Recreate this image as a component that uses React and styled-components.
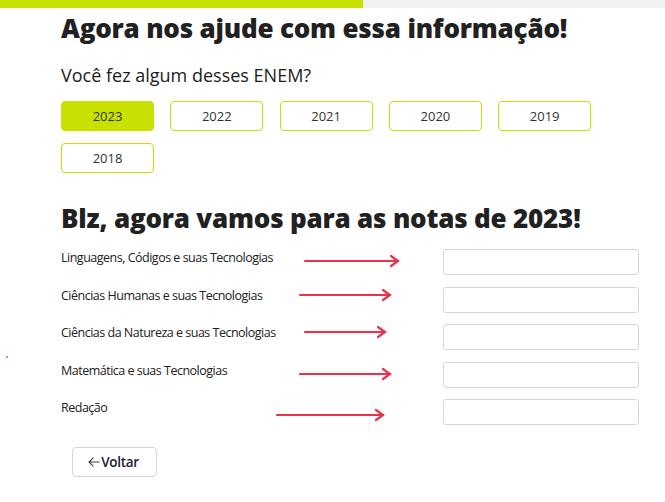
import React, { useState } from 'react';
import styled, { createGlobalStyle } from 'styled-components';

const GlobalStyle = createGlobalStyle`
  body {
    margin: 0;
    background: #ffffff;
    font-family: 'Open Sans', 'Liberation Sans', sans-serif;
    color: #212121;
  }
`;

const LIME = '#c8e100';

const Page = styled.div`
  position: relative;
  width: 665px;
  min-height: 502px;
`;

const Progress = styled.div`
  height: 8px;
  background: #f2f2f2;
`;

const ProgressFill = styled.div`
  height: 100%;
  background: ${LIME};
`;

const Content = styled.div`
  width: 578px;
  margin-left: 61px;
  display: flex;
  flex-direction: column;
`;

const Heading = styled.h1`
  margin: ${(p) => p.$mt} 0 0;
  font-size: 26px;
  font-weight: 800;
  letter-spacing: -0.2px;
  line-height: 36px;
`;

const Question = styled.h2`
  margin: 17px 0 0;
  font-size: 18px;
  font-weight: 400;
  line-height: 24px;
  color: #1c1c1c;
`;

const Years = styled.div`
  margin-top: 14px;
  display: grid;
  grid-template-columns: repeat(5, 93px);
  column-gap: 16.3px;
  row-gap: 12px;
`;

const YearButton = styled.button`
  height: 30px;
  border: 1px solid ${LIME};
  border-radius: 4px;
  background: ${(p) => (p.$active ? LIME : '#ffffff')};
  font-family: inherit;
  font-size: 13px;
  color: #333333;
  cursor: pointer;
`;

const Form = styled.div`
  position: relative;
  margin-top: 13px;
  display: flex;
  flex-direction: column;
  gap: 11.5px;
`;

const Row = styled.div`
  display: grid;
  grid-template-columns: 1fr 196px;
  align-items: start;
  height: 26px;
`;

const Label = styled.label`
  font-size: 12.5px;
  letter-spacing: -0.5px;
  line-height: 18px;
  color: #212121;
`;

const ScoreInput = styled.input`
  box-sizing: border-box;
  width: 196px;
  height: 26px;
  border: 1px solid #d6d6d6;
  border-radius: 3px;
  outline: none;
`;

const Arrows = styled.svg`
  position: absolute;
  left: -61px;
  top: 0;
  pointer-events: none;
`;

const BackButton = styled.button`
  align-self: flex-start;
  margin: 22px 0 0 11px;
  width: 85px;
  height: 30px;
  border: 1px solid #d6d6d6;
  border-radius: 4px;
  background: #ffffff;
  font-family: inherit;
  font-size: 13.5px;
  font-weight: 600;
  letter-spacing: -0.3px;
  color: #1c2030;
  display: flex;
  align-items: center;
  justify-content: center;
  gap: 1px;
  padding: 0 2px 0 0;
`;

const Dot = styled.span`
  position: absolute;
  left: 6px;
  top: 356px;
  width: 2px;
  height: 2px;
  border-radius: 50%;
  background: #e8596b;
`;

const years = ['2023', '2022', '2021', '2020', '2019', '2018'];

const subjects = [
  'Linguagens, Códigos e suas Tecnologias',
  'Ciências Humanas e suas Tecnologias',
  'Ciências da Natureza e suas Tecnologias',
  'Matemática e suas Tecnologias',
  'Redação',
];

// hand-drawn annotation arrows, coordinates relative to the form box
const arrowLines = [
  { x1: 305, y1: 12, x2: 398, y2: 12 },
  { x1: 300, y1: 46, x2: 390, y2: 46 },
  { x1: 305, y1: 83, x2: 385, y2: 83 },
  { x1: 300, y1: 125, x2: 390, y2: 125 },
  { x1: 277, y1: 166, x2: 383, y2: 166 },
];

const BackArrow = () => (
  <svg width="12" height="10" viewBox="0 0 12 10" fill="none" stroke="#3a3f4a" strokeWidth="1.1">
    <path d="M11.5 5H1M5.5 0.6L1 5l4.5 4.4" />
  </svg>
);

export default function App() {
  const [year, setYear] = useState('2023');

  return (
    <Page>
      <GlobalStyle />
      <Progress>
        <ProgressFill style={{ width: '363px' }} />
      </Progress>
      <Content>
        <Heading $mt="2px">Agora nos ajude com essa informação!</Heading>
        <Question>Você fez algum desses ENEM?</Question>
        <Years>
          {years.map((y) => (
            <YearButton key={y} $active={y === year} onClick={() => setYear(y)}>
              {y}
            </YearButton>
          ))}
        </Years>

        <Heading $mt="27px">Blz, agora vamos para as notas de {year}!</Heading>

        <Form>
          {subjects.map((s) => (
            <Row key={s}>
              <Label>{s}</Label>
              <ScoreInput type="text" />
            </Row>
          ))}
          <Arrows width="665" height="180" viewBox="0 0 665 180">
            {arrowLines.map((a, i) => (
              <g key={i} stroke="#e8344e" strokeWidth="2.2" fill="none" strokeLinecap="round">
                <line x1={a.x1} y1={a.y1} x2={a.x2} y2={a.y2} />
                <polyline points={`${a.x2 - 7},${a.y2 - 5} ${a.x2},${a.y2} ${a.x2 - 7},${a.y2 + 5}`} />
              </g>
            ))}
          </Arrows>
        </Form>

        <BackButton>
          <BackArrow />
          Voltar
        </BackButton>
      </Content>
      <Dot />
    </Page>
  );
}
